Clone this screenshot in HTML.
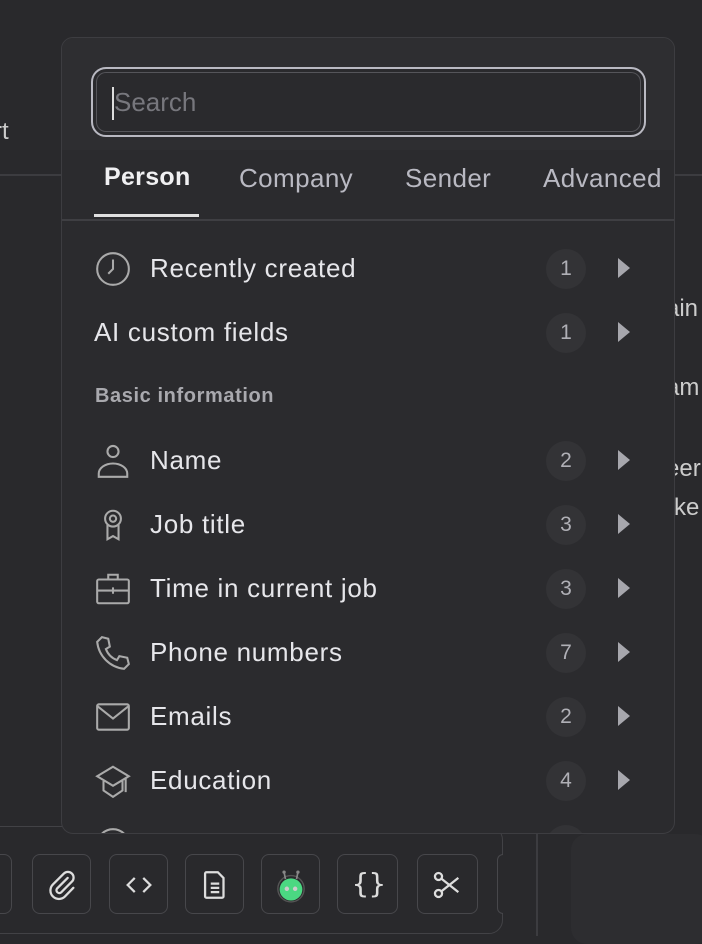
<!DOCTYPE html>
<html><head><style>
*{box-sizing:border-box;margin:0;padding:0}
body{width:702px;height:936px;background:#29292c;font-family:"Liberation Sans",Arial,sans-serif;position:relative;overflow:hidden;color:#e4e4e8}
.abs{position:absolute}
.pop{left:61px;top:37px;width:614px;height:797px;background:#2b2b2e;border:1.5px solid #3d3d41;border-radius:12px;overflow:hidden}
.hdr{position:absolute;left:0;top:0;width:100%;height:112px;background:#2e2e31}
.search{position:absolute;left:29px;top:29px;width:555px;height:70px;border:2px solid #b9b9c2;border-radius:15px;background:#2a2a2d;box-shadow:inset 0 0 0 3px #2a2a2d, inset 0 0 0 4px #55555a}
.search span{position:absolute;left:21px;top:18px;font-size:26px;color:#77777d}
.search i{position:absolute;left:19px;top:18px;width:1.5px;height:33px;background:#ddd}
.tab{position:absolute;top:125px;font-size:26px;color:#b9b9c2;letter-spacing:0.4px}
.row{position:absolute;left:0;width:100%;height:64px}
.row .t{position:absolute;left:88px;top:16px;font-size:26px;color:#e6e6ea;letter-spacing:0.7px}
.row .b{position:absolute;left:484px;top:12px;width:40px;height:40px;border-radius:50%;background:#333336;color:#b0b0b6;font-size:21px;text-align:center;line-height:40px}
.row .a{position:absolute;left:556px;top:21px;width:0;height:0;border-left:12px solid #a7a7ad;border-top:10px solid transparent;border-bottom:10px solid transparent}
.row svg{position:absolute;left:32px;top:13px}
.btn{position:absolute;top:854px;width:59px;height:60px;border:1.5px solid #47474b;border-radius:8px;background:#29292c}
.btn svg{position:absolute;left:12px;top:13px}
</style></head><body>
<div class="abs" style="top:118px;font-size:24px;color:#ccc;left:-6px">rt</div>
<div class="abs" style="left:0;top:174px;width:702px;height:1.5px;background:#3c3c40"></div>
<div class="abs" style="top:295px;font-size:24px;color:#ccc;left:666px">ain</div>
<div class="abs" style="left:666px;top:374px;font-size:24px;color:#ccc">am</div>
<div class="abs" style="left:666px;top:455px;font-size:24px;color:#ccc">eer</div>
<div class="abs" style="left:666px;top:494px;font-size:24px;color:#ccc">rke</div>
<div class="abs" style="left:-20px;top:826px;width:523px;height:108px;border:1.5px solid #424246;border-radius:14px;background:#29292c;overflow:hidden">
</div>
<div class="abs" style="left:536px;top:834px;width:1.5px;height:102px;background:#3c3c40"></div>
<div class="abs" style="left:571px;top:834px;width:140px;height:110px;background:#2d2d30;border-radius:16px"></div>
<div class="btn" style="left:-47px"></div>
<div class="btn" style="left:32px"><svg width="34" height="34" viewBox="0 0 24 24" fill="none" stroke="#ddd" stroke-width="1.6" stroke-linecap="round"><path d="M16 7l-7.5 7.5a2 2 0 0 0 2.8 2.8L19 9.6a4 4 0 0 0-5.7-5.7L5.6 11.6a6 6 0 0 0 8.5 8.5L20 14"/></svg></div>
<div class="btn" style="left:109px"><svg width="34" height="34" viewBox="0 0 24 24" fill="none" stroke="#ddd" stroke-width="1.6"><path d="M9 7l-5 5 5 5M15 7l5 5-5 5"/></svg></div>
<div class="btn" style="left:185px"><svg width="34" height="34" viewBox="0 0 24 24" fill="none" stroke="#ddd" stroke-width="1.6"><path d="M6 3h8l4 4v13a1 1 0 0 1-1 1H6a1 1 0 0 1-1-1V4a1 1 0 0 1 1-1zM9 11h6M9 14h6M9 17h6"/></svg></div>
<div class="btn" style="left:261px"><svg width="34" height="36" viewBox="0 0 24 26"><circle cx="12" cy="15" r="9.5" fill="none" stroke="#555" stroke-width="1"/><path d="M8 8L7 3M16 8l1-5" stroke="#888" stroke-width="1.2"/><circle cx="7" cy="3" r="1.2" fill="#888"/><circle cx="17" cy="3" r="1.2" fill="#888"/><ellipse cx="12" cy="15.5" rx="8.2" ry="8" fill="#4bd882"/><circle cx="9" cy="15" r="1.6" fill="#ccc"/><circle cx="15" cy="15" r="1.6" fill="#ccc"/></svg></div>
<div class="btn" style="left:337px;width:61px"><div style="position:absolute;left:14px;top:12px;font-size:28px;color:#ddd;font-family:'DejaVu Sans Mono',monospace">{}</div></div>
<div class="btn" style="left:417px;width:61px"><svg width="34" height="34" viewBox="0 0 24 24" fill="none" stroke="#ddd" stroke-width="1.6"><circle cx="6" cy="6" r="2.5"/><circle cx="6" cy="18" r="2.5"/><path d="M8 7.5L20 17M8 16.5L20 7"/></svg></div>
<div class="btn" style="left:497px;width:6px;border-right:none;border-radius:8px 0 0 8px"></div>

<div class="abs pop">
 <div class="hdr"></div>
 <div class="search"><i></i><span>Search</span></div>
 <div class="tab" style="left:42px;color:#f0f0f2;font-weight:bold;font-size:25px;letter-spacing:0.3px">Person</div>
 <div class="tab" style="left:177px">Company</div>
 <div class="tab" style="left:343px">Sender</div>
 <div class="tab" style="left:481px">Advanced</div>
 <div class="abs" style="left:32px;top:176px;width:105px;height:3px;background:#e0e0e0"></div>
 <div class="abs" style="left:0;top:181px;width:100%;height:1.5px;background:#3f3f43"></div>

 <div class="row" style="top:199px"><svg width="38" height="38" viewBox="0 0 24 24" fill="none" stroke="#aaa" stroke-width="1.3"><circle cx="12" cy="12" r="10"/><path d="M12 6v6l-3 3"/></svg><div class="t">Recently created</div><div class="b">1</div><div class="a"></div></div>
 <div class="row" style="top:263px"><div class="t" style="left:32px">AI custom fields</div><div class="b">1</div><div class="a"></div></div>
 <div class="abs" style="left:33px;top:347px;font-size:20px;color:#a9a9ae;font-weight:bold;letter-spacing:0.6px">Basic information</div>
 <div class="row" style="top:391px"><svg width="38" height="38" viewBox="0 0 24 24" fill="none" stroke="#aaa" stroke-width="1.3"><circle cx="12" cy="6" r="3.5"/><path d="M3 22v-2a7 5 0 0 1 18 0v2z"/></svg><div class="t">Name</div><div class="b">2</div><div class="a"></div></div>
 <div class="row" style="top:455px"><svg width="38" height="38" viewBox="0 0 24 24" fill="none" stroke="#aaa" stroke-width="1.3"><circle cx="12" cy="8" r="5"/><circle cx="12" cy="8" r="2"/><path d="M8.5 12v9l3.5-2 3.5 2v-9"/></svg><div class="t">Job title</div><div class="b">3</div><div class="a"></div></div>
 <div class="row" style="top:519px"><svg width="38" height="38" viewBox="0 0 24 24" fill="none" stroke="#aaa" stroke-width="1.3"><rect x="2" y="6" width="20" height="15" rx="1"/><path d="M9 6V3h6v3M2 13h20M12 11v4"/></svg><div class="t">Time in current job</div><div class="b">3</div><div class="a"></div></div>
 <div class="row" style="top:583px"><svg width="38" height="38" viewBox="0 0 24 24" fill="none" stroke="#aaa" stroke-width="1.3"><path d="M5 2l4 1 1 5-2.5 1.5a12 12 0 0 0 7 7L16 14l5 1 1 4-3 3C10 21 3 14 2 5z"/></svg><div class="t">Phone numbers</div><div class="b">7</div><div class="a"></div></div>
 <div class="row" style="top:647px"><svg width="38" height="38" viewBox="0 0 24 24" fill="none" stroke="#aaa" stroke-width="1.3"><rect x="2" y="4" width="20" height="16" rx="1"/><path d="M2 5l10 8 10-8"/></svg><div class="t">Emails</div><div class="b">2</div><div class="a"></div></div>
 <div class="row" style="top:711px"><svg width="38" height="38" viewBox="0 0 24 24" fill="none" stroke="#aaa" stroke-width="1.3"><path d="M12 3l10 6-10 6L2 9zM6 12v6l6 4 6-4v-6M20 10v9"/></svg><div class="t">Education</div><div class="b">4</div><div class="a"></div></div>
 <div class="row" style="top:775px"><svg width="38" height="38" viewBox="0 0 24 24" fill="none" stroke="#aaa" stroke-width="1.3"><circle cx="12" cy="12" r="10"/></svg><div class="t">Location</div><div class="b"></div></div>
</div>
</body></html>
